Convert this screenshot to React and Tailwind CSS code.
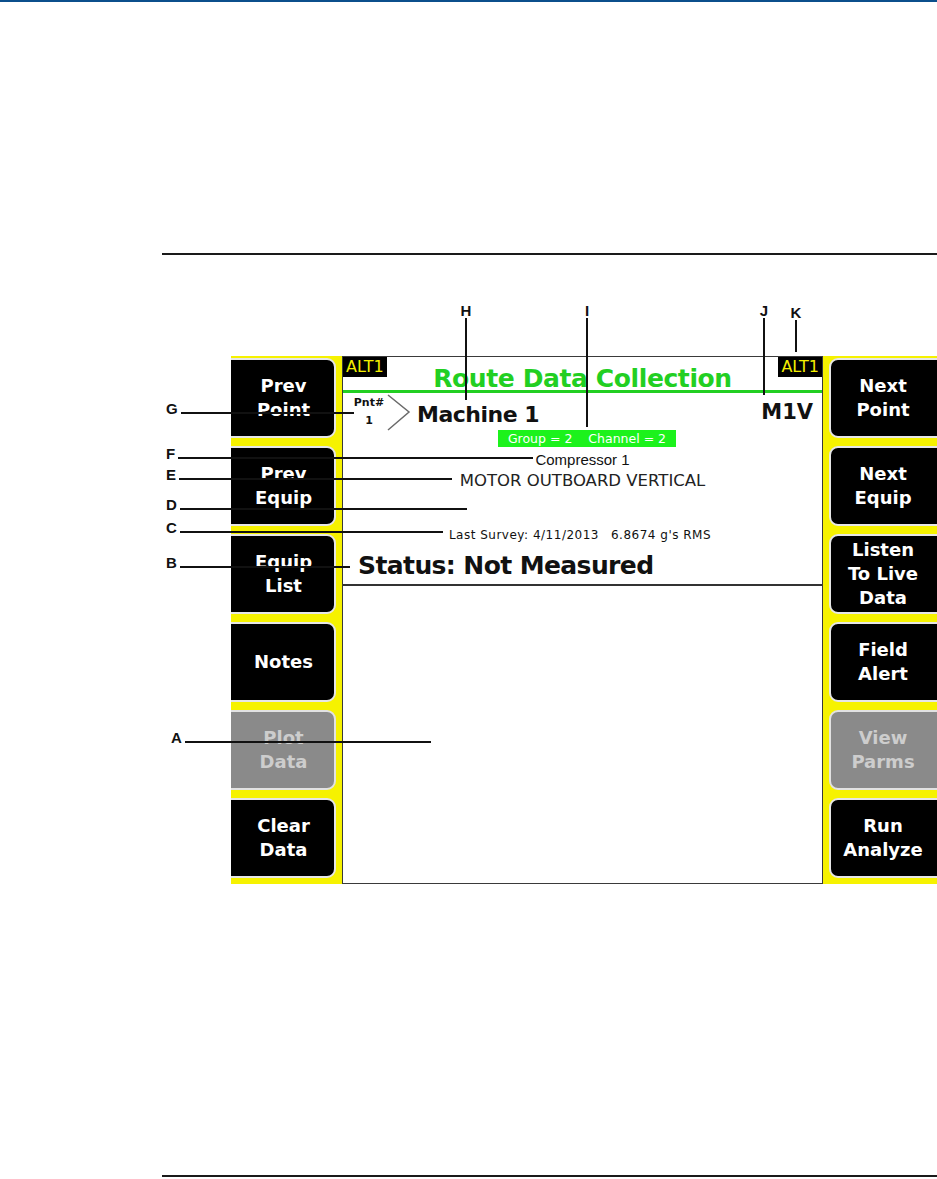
import React from 'react';

const leftKeys = [
  { lines: ['Prev', 'Point'] },
  { lines: ['Prev', 'Equip'] },
  { lines: ['Equip', 'List'] },
  { lines: ['Notes'] },
  { lines: ['Plot', 'Data'], dim: true },
  { lines: ['Clear', 'Data'] },
];

const rightKeys = [
  { lines: ['Next', 'Point'] },
  { lines: ['Next', 'Equip'] },
  { lines: ['Listen', 'To Live', 'Data'] },
  { lines: ['Field', 'Alert'] },
  { lines: ['View', 'Parms'], dim: true },
  { lines: ['Run', 'Analyze'] },
];

// callouts that point sideways from the left margin
const sideCallouts = [
  { letter: 'G', top: 401, left: 166, len: 173 },
  { letter: 'F', top: 446, left: 166, len: 355 },
  { letter: 'E', top: 467, left: 166, len: 273 },
  { letter: 'D', top: 497, left: 166, len: 287 },
  { letter: 'C', top: 520, left: 166, len: 263 },
  { letter: 'B', top: 555, left: 166, len: 170 },
  { letter: 'A', top: 730, left: 171, len: 246 },
];

// callouts hanging down from above the screen
const topCallouts = [
  { letter: 'H', top: 303, left: 456, len: 82 },
  { letter: 'I', top: 303, left: 577, len: 109 },
  { letter: 'J', top: 303, left: 754, len: 77 },
  { letter: 'K', top: 305, left: 786, len: 32 },
];

const SoftKey = ({ lines, dim, side }) => (
  <div className="h-[88px] pt-[2px] pb-[6px] flex">
    <div
      className={`h-[80px] flex-1 flex flex-col items-center justify-center border-2 rounded-[9px] text-[18px] leading-[24px] font-bold ${
        side === 'left' ? '-ml-[12px] mr-[6px] pl-[12px]' : 'ml-[6px] -mr-[12px] pr-[12px]'
      } ${dim ? 'bg-[#8a8a8a] text-[#cdcdcd] border-[#e2e2e2]' : 'bg-black text-white border-[#e6e6e6]'}`}
    >
      {lines.map((l) => (
        <span key={l} className="whitespace-nowrap">{l}</span>
      ))}
    </div>
  </div>
);

const Alt = () => (
  <div className="h-[20px] px-[3px] bg-black text-[#f4ef00] text-[16px] leading-[20px]">ALT1</div>
);

export default function App() {
  return (
    <div className="relative w-full min-h-[1179px] bg-white overflow-hidden font-['DejaVu_Sans',sans-serif]">
      <div className="h-[2px] bg-[#0b4f8c]" />

      <div className="mt-[251px] ml-[162px] h-[2px] bg-[#1a1a1a]" />

      {/* instrument screen */}
      <div className="mt-[101px] ml-[231px] w-[706px] h-[528px] flex overflow-hidden">
        <div className="w-[111px] shrink-0 bg-[#f6f200] flex flex-col overflow-hidden">
          {leftKeys.map((k) => (
            <SoftKey key={k.lines.join()} {...k} side="left" />
          ))}
        </div>

        <div className="w-[481px] shrink-0 bg-white border border-[#3a3a3a] flex flex-col">
          <div className="grid grid-cols-[1fr_auto_1fr] h-[36px] border-b-[3px] border-[#22cf22]">
            <div className="justify-self-start">
              <Alt />
            </div>
            <div className="mt-[9px] text-[25px] leading-none font-bold text-[#22cf22] whitespace-nowrap tracking-[-0.4px]">
              Route Data Collection
            </div>
            <div className="justify-self-end">
              <Alt />
            </div>
          </div>

          <div className="flex items-start h-[37px] pl-[10px] pr-[9px] text-[#111]">
            <div className="w-[32px] mt-[1px] flex flex-col items-center text-[11px] leading-[18px] font-bold">
              <span>Pnt#</span>
              <span>1</span>
            </div>
            <svg className="ml-[2px] w-[24px] h-[38px]" viewBox="0 0 24 38" fill="none">
              <polyline points="1,2 22,19 1,37" stroke="#6a6a6a" strokeWidth="1.5" />
            </svg>
            <div className="ml-[6px] mt-[11px] text-[22px] leading-none font-bold tracking-[-0.5px]">Machine 1</div>
            <div className="ml-auto mt-[9px] text-[21px] leading-none font-bold">M1V</div>
          </div>

          <div className="h-[17px] flex justify-center pl-[9px]">
            <div className="h-[17px] bg-[#1cf21c] text-white text-[12.5px] leading-[17px] px-[10px] flex gap-[16px]">
              <span>Group = 2</span>
              <span>Channel = 2</span>
            </div>
          </div>

          <div className="mt-[5px] text-center text-[15px] leading-none text-[#111] font-['Liberation_Sans',sans-serif]">
            Compressor 1
          </div>
          <div className="mt-[6px] text-center text-[16.5px] leading-none text-[#222]">
            MOTOR OUTBOARD VERTICAL
          </div>
          <div className="mt-[39px] pr-[5px] text-center text-[12px] leading-none text-[#111] tracking-[0.5px]">
            Last Survey: 4/11/2013<span className="ml-[12px]">6.8674 g's RMS</span>
          </div>
          <div className="mt-[12px] pl-[15px] pb-[6px] border-b-2 border-[#333] text-[25px] leading-none font-bold text-[#111] tracking-[-0.6px]">
            Status: Not Measured
          </div>
          <div className="flex-1" />
        </div>

        <div className="flex-1 bg-[#f6f200] flex flex-col overflow-hidden">
          {rightKeys.map((k) => (
            <SoftKey key={k.lines.join()} {...k} side="right" />
          ))}
        </div>
      </div>

      <div className="mt-[291px] ml-[162px] h-[2px] bg-[#1a1a1a]" />

      {/* callout letters and leader lines */}
      {sideCallouts.map((c) => (
        <div
          key={c.letter}
          className="absolute flex items-end h-[15px] gap-[3px] font-['Liberation_Sans',sans-serif]"
          style={{ top: c.top, left: c.left }}
        >
          <span className="text-[15px] leading-none font-bold text-[#111]">{c.letter}</span>
          <div className="h-[2px] mb-[2px] bg-[#111]" style={{ width: c.len }} />
        </div>
      ))}
      {topCallouts.map((c) => (
        <div
          key={c.letter}
          className="absolute w-[20px] flex flex-col items-center font-['Liberation_Sans',sans-serif]"
          style={{ top: c.top, left: c.left }}
        >
          <span className="text-[15px] leading-none font-bold text-[#111]">{c.letter}</span>
          <div className="w-[2px] bg-[#111]" style={{ height: c.len }} />
        </div>
      ))}
    </div>
  );
}
